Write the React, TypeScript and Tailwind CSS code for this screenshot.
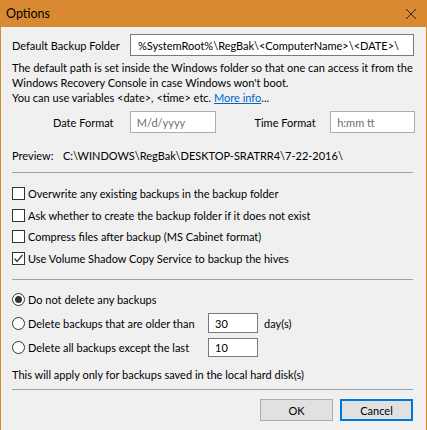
const font = { fontFamily: 'Lato, "Noto Sans", sans-serif' };

const Checkbox = ({ checked, label }: { checked?: boolean; label: string }) => (
  <div className="flex items-center h-[21.6px]">
    <span className="flex items-center justify-center w-[13px] h-[13px] border border-[#333] bg-white">
      {checked && (
        <svg width="11" height="11" viewBox="0 0 11 11">
          <path d="M1.5 5.5 L4 8.5 L9.5 2" fill="none" stroke="#333" strokeWidth="1.2" />
        </svg>
      )}
    </span>
    <span className="ml-[3px]">{label}</span>
  </div>
);

const Radio = ({ checked, label }: { checked?: boolean; label: string }) => (
  <span className="flex items-center">
    <span className="flex items-center justify-center w-[13px] h-[13px] rounded-full border border-[#333] bg-white">
      {checked && <span className="w-[7px] h-[7px] rounded-full bg-[#333]" />}
    </span>
    <span className="ml-[3px]">{label}</span>
  </span>
);

const App = () => {
  return (
    <div
      className="w-[427px] h-[430px] flex flex-col bg-[#f0f0f0] text-[11px] text-black leading-[15px] whitespace-nowrap border-x border-[#d98a30] overflow-hidden"
      style={font}
    >
      <div className="h-[27px] shrink-0 bg-[#d98a30] flex items-center justify-between pl-[5px] pr-[9px] text-[12.5px]">
        <span>Options</span>
        <svg width="12" height="12" viewBox="0 0 12 12">
          <path d="M1 1 L11 11 M11 1 L1 11" stroke="#222" strokeWidth="1" />
        </svg>
      </div>

      <div className="flex flex-col px-[11px]">
        <div className="flex items-center h-[22px] mt-[7px]">
          <span className="w-[118px]">Default Backup Folder</span>
          <div className="flex-1 h-[22px] border border-[#7a7a7a] bg-white flex items-center px-[7px] mr-[1px]">
            %SystemRoot%\RegBak\&lt;ComputerName&gt;\&lt;DATE&gt;\
          </div>
        </div>

        <div className="mt-[4px]">
          <p>The default path is set inside the Windows folder so that one can access it from the</p>
          <p>Windows Recovery Console in case Windows won't boot.</p>
          <p>
            You can use variables &lt;date&gt;, &lt;time&gt; etc.{" "}
            <span className="text-[#0066cc] underline">More info</span>...
          </p>
        </div>

        <div className="flex items-center h-[22px] mt-[6px]">
          <span className="ml-[41px] w-[77px]">Date Format</span>
          <div className="w-[87px] h-[22px] border border-[#adadad] bg-white flex items-center px-[6px] text-[#6d6d6d]">
            M/d/yyyy
          </div>
          <span className="ml-[38px] w-[76px]">Time Format</span>
          <div className="w-[85px] h-[22px] border border-[#adadad] bg-white flex items-center px-[6px] text-[#6d6d6d]">
            h:mm tt
          </div>
        </div>

        <div className="flex items-center h-[15px] mt-[15px]">
          <span className="w-[51px]">Preview:</span>
          <span>C:\WINDOWS\RegBak\DESKTOP-SRATRR4\7-22-2016\</span>
        </div>

        <div className="h-px bg-[#a0a0a0] mt-[9px] mr-[2px]" />

        <div className="flex flex-col mt-[10px]">
          <Checkbox label="Overwrite any existing backups in the backup folder" />
          <Checkbox label="Ask whether to create the backup folder if it does not exist" />
          <Checkbox label="Compress files after backup (MS Cabinet format)" />
          <Checkbox checked label="Use Volume Shadow Copy Service to backup the hives" />
        </div>

        <div className="h-px bg-[#a0a0a0] mt-[10px] mr-[2px]" />

        <div className="flex flex-col mt-[7px]">
          <div className="flex items-center h-[24px]">
            <Radio checked label="Do not delete any backups" />
          </div>
          <div className="flex items-center h-[24px]">
            <span className="w-[196px]">
              <Radio label="Delete backups that are older than" />
            </span>
            <div className="w-[50px] h-[20px] border border-[#7a7a7a] bg-white flex items-center px-[6px]">30</div>
            <span className="ml-[6px]">day(s)</span>
          </div>
          <div className="flex items-center h-[24px]">
            <span className="w-[196px]">
              <Radio label="Delete all backups except the last" />
            </span>
            <div className="w-[50px] h-[19px] border border-[#7a7a7a] bg-white flex items-center px-[6px]">10</div>
          </div>
        </div>

        <p className="mt-[8px]">This will apply only for backups saved in the local hard disk(s)</p>

        <div className="h-px bg-[#a0a0a0] mt-[7px] mr-[2px]" />

        <div className="flex justify-end gap-[7px] mt-[9px] mr-[2px]">
          <button className="w-[73px] h-[22px] bg-[#e1e1e1] border border-[#adadad]">OK</button>
          <button className="w-[73px] h-[22px] bg-[#e1e1e1] border-2 border-[#0078d7]">Cancel</button>
        </div>
      </div>
    </div>
  );
};

export default App;
